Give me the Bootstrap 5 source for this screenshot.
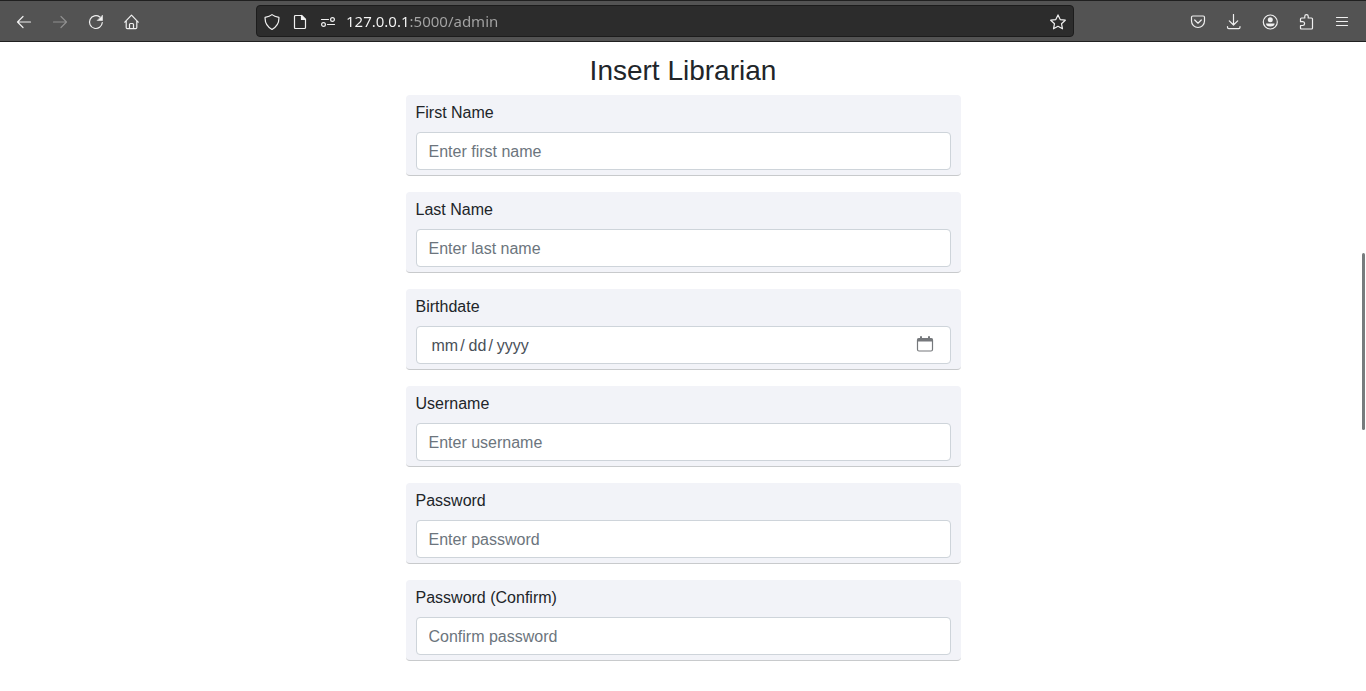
<!DOCTYPE html>
<html lang="en">
<head>
<meta charset="utf-8">
<meta name="viewport" content="width=device-width, initial-scale=1">
<title>Admin</title>
<link rel="stylesheet" href="https://cdn.jsdelivr.net/npm/bootstrap@5.3.0/dist/css/bootstrap.min.css">
<style>
  body { font-family: "Liberation Sans", Arial, sans-serif; color: #212529; }
  svg { display: block; width: 16px; height: 16px; fill: none; stroke: currentColor; stroke-width: 1.2; stroke-linecap: round; stroke-linejoin: round; }
  .toolbar { height: 42px; padding: 0 6px; background: #535353; border-top: 1px solid #202020; border-bottom: 1px solid #202020; color: #f0f0f0; }
  .tool { width: 36px; height: 32px; padding: 1px 0 0; border: 0; background: none; color: inherit; display: grid; place-items: center; }
  .tool:disabled { color: #8f8f8f; }
  .address { height: 32px; margin: 0 106px; padding: 0 1px; background: #2c2c2c; border: 1px solid #1c1c1c; border-radius: 4px; }
  .address .tool { width: 28px; height: 30px; }
  .url { min-width: 0; padding: 0 4px; border: 0; outline: 0; font: 15px/20px "Noto Sans", sans-serif; color: transparent; background: linear-gradient(90deg, #f8f8f8 67px, #a5a5a5 67px); background-clip: text; -webkit-background-clip: text; }
  .page-form { max-width: 555px; margin: 0 auto; padding-top: 12px; }
  .page-form h1 { font-size: 28px; line-height: 34px; font-weight: 400; margin-bottom: 7px; }
  .field { padding: 6px 10px 5px; margin-bottom: 16px; background: #f2f3f8; border-bottom: 1px solid #c8cacc; border-radius: 4px; }
  .field .form-label { margin-bottom: 7px; }
  .field .form-control { height: 38px; padding: 7px 12px 5px; border-color: #ced4da; border-radius: 4px; color: #495057; }
  .field .form-control::placeholder { color: #6c757d; }
  .date-box svg { position: absolute; right: 17px; top: 9px; width: 18px; height: 18px; color: #76797c; pointer-events: none; }
  .date-box ::-webkit-calendar-picker-indicator { opacity: 0; }
  .date-box ::-webkit-datetime-edit-fields-wrapper { padding: 0 3px; }
  .date-box ::-webkit-datetime-edit-text { padding: 0 4px 0 2px; }
  .scroll-thumb { position: fixed; right: 1px; top: 253px; width: 3px; height: 177px; border-radius: 2px; background: #777c7e; }
</style>
</head>
<body class="overflow-hidden">
<header class="toolbar d-flex align-items-center">
  <button class="tool" type="button" aria-label="Back"><svg viewBox="0 0 16 16"><path d="M14.500 8H1.500M7 2.500 1.500 8 7 13.500"/></svg></button>
  <button class="tool" type="button" aria-label="Forward" disabled><svg viewBox="0 0 16 16"><path d="M1.500 8h13M9 2.500 14.500 8 9 13.500"/></svg></button>
  <button class="tool" type="button" aria-label="Reload"><svg viewBox="0 0 16 16"><path d="M14.300 8.500A6.400 6.400 0 1 1 11.800 3"/><path d="M14.500 1.500v5h-5z" fill="currentColor" stroke-width=".6"/></svg></button>
  <button class="tool" type="button" aria-label="Home"><svg viewBox="0 0 16 16"><path d="M.8 8.200 7.500 1.200l6.700 7M2.200 7v6.500q0 1.200 1.200 1.200h8.200q1.200 0 1.200-1.200V7M5.500 14.500v-4q0-1 1-1h2q1 0 1 1v4"/></svg></button>
  <div class="address d-flex align-items-center flex-grow-1">
    <button class="tool" type="button" aria-label="Tracking protection"><svg viewBox="0 0 16 16"><path d="M8 .6C6.200 2 3.600 2.800 1.100 3.300q-.5 8 6.900 12.200 7.400-4.200 6.900-12.200C12.400 2.800 9.800 2 8 .6z"/></svg></button>
    <button class="tool" type="button" aria-label="Site information"><svg viewBox="0 0 16 16"><path d="M3.500 1.500h6l4 4v8q0 1-1 1h-9q-1 0-1-1v-11q0-1 1-1z"/><path d="M9.500 1.500v4h4z" fill="currentColor"/></svg></button>
    <button class="tool" type="button" aria-label="Permissions"><svg viewBox="0 0 16 16"><path d="M1.500 5.500h7M7.500 10.500h7"/><circle cx="12.500" cy="5.500" r="1.900"/><circle cx="3.500" cy="10.500" r="1.900"/></svg></button>
    <input class="url flex-grow-1" type="text" value="127.0.0.1:5000/admin" aria-label="Address" spellcheck="false">
    <button class="tool" type="button" aria-label="Bookmark"><svg viewBox="0 0 16 16"><path d="m8 .9 2.200 4.700 5.100.6-3.800 3.500 1 5.100L8 12.300l-4.500 2.500 1-5.100L.7 6.200l5.100-.6z"/></svg></button>
  </div>
  <button class="tool" type="button" aria-label="Save to Pocket"><svg viewBox="0 0 16 16"><path d="M2.800 2h10.400q1.300 0 1.300 1.300V7a6.500 6.500 0 0 1-13 0V3.300Q1.500 2 2.800 2zM4.700 6 8 9.200 11.300 6"/></svg></button>
  <button class="tool" type="button" aria-label="Downloads"><svg viewBox="0 0 16 16"><path d="M7.500.5v10.300M3.300 6.800 7.500 11l4.200-4.200M1.500 12.500v.8q0 1.300 1.300 1.300h9.900q1.300 0 1.300-1.300v-.8"/></svg></button>
  <button class="tool" type="button" aria-label="Account"><svg viewBox="0 0 16 16"><circle cx="8.300" cy="8" r="7"/><circle cx="8.300" cy="5.800" r="2.500" fill="currentColor" stroke="none"/><path d="M4 9.500h8.600q0 3-4.300 3T4 9.500z" fill="currentColor" stroke="none"/></svg></button>
  <button class="tool" type="button" aria-label="Extensions"><svg viewBox="0 0 16 16"><path d="M2.500 7V5q0-1 1-1h3.300V2.300a1.700 1.700 0 0 1 3.400 0V4h3.300q1 0 1 1v9q0 1-1 1h-10q-1 0-1-1v-2.500h2.200a1.900 1.900 0 0 0 0-3.800H2.500z"/></svg></button>
  <button class="tool" type="button" aria-label="Menu"><svg viewBox="0 0 16 16"><path d="M2.500 3.500h11M2.500 7.500h11M2.500 11.500h11"/></svg></button>
</header>
<main>
  <form class="page-form">
    <h1 class="text-center">Insert Librarian</h1>
    <div class="field"><label class="form-label" for="first">First Name</label><input class="form-control" id="first" type="text" placeholder="Enter first name"></div>
    <div class="field"><label class="form-label" for="last">Last Name</label><input class="form-control" id="last" type="text" placeholder="Enter last name"></div>
    <div class="field"><label class="form-label" for="birth">Birthdate</label>
      <div class="date-box position-relative"><input class="form-control" id="birth" type="date"><svg viewBox="0 0 18 18"><path d="M3 3.500h12q1.500 0 1.500 1.500v9.500q0 1.500-1.500 1.500H3q-1.500 0-1.500-1.500V5Q1.500 3.500 3 3.500z"/><path d="M2 4h14v2H2z" fill="currentColor"/><path d="M5 2V4M13 2V4" stroke-width="2"/></svg></div></div>
    <div class="field"><label class="form-label" for="user">Username</label><input class="form-control" id="user" type="text" placeholder="Enter username"></div>
    <div class="field"><label class="form-label" for="pass">Password</label><input class="form-control" id="pass" type="password" placeholder="Enter password"></div>
    <div class="field"><label class="form-label" for="confirm">Password (Confirm)</label><input class="form-control" id="confirm" type="password" placeholder="Confirm password"></div>
  </form>
</main>
<div class="scroll-thumb"></div>
<script src="https://cdn.jsdelivr.net/npm/bootstrap@5.3.0/dist/js/bootstrap.bundle.min.js"></script>
</body>
</html>
